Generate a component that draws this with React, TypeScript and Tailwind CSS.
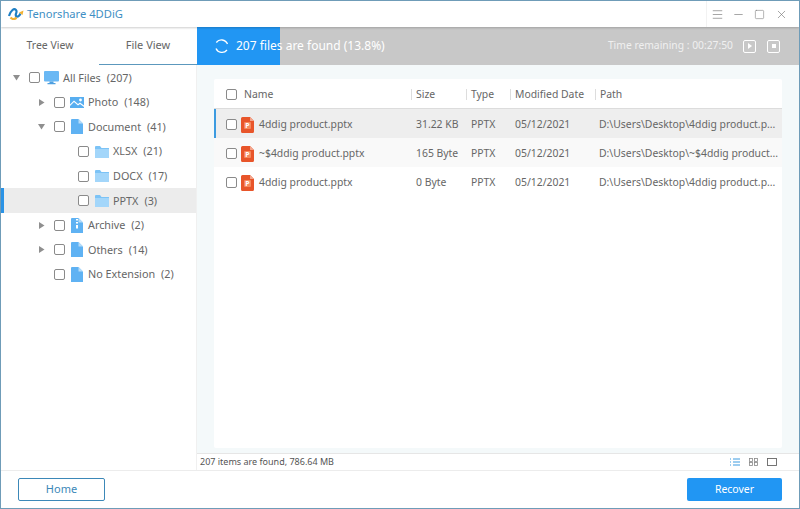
import { Menu, Minus, Square, X } from "lucide-react";

const font = "font-['Noto_Sans','Open_Sans',sans-serif]";

function Check({ className = "" }: { className?: string }) {
  return <span className={`block w-[11px] h-[11px] shrink-0 rounded-[2px] border border-[#8a8a8a] bg-white ${className}`} />;
}

function Arrow({ open }: { open?: boolean }) {
  return (
    <svg width="7" height="7" viewBox="0 0 7 7" className="shrink-0">
      {open ? <path d="M0 1h7L3.500 6.500z" fill="#8f8f8f" /> : <path d="M1 0l5.500 3.500L1 7z" fill="#8f8f8f" />}
    </svg>
  );
}

function Monitor() {
  return (
    <svg width="15" height="14" viewBox="0 0 15 14" className="shrink-0">
      <rect width="15" height="10.500" rx="1" fill="#6ab8f4" />
      <path d="M5.500 10.500h4V12h2v1.200h-8V12h2z" fill="#4d9fe0" />
    </svg>
  );
}

function Picture() {
  return (
    <svg width="14" height="11" viewBox="0 0 14 11" className="shrink-0">
      <rect width="14" height="11" fill="#58aef0" />
      <circle cx="10.500" cy="3" r="1.400" fill="#fff" />
      <path d="M0 9l4-4 4 3.500 2-1.500 4 3V8.500l-4-3-2 1.500-4-3.500-4 4z" fill="#fff" />
    </svg>
  );
}

function Doc({ zip }: { zip?: boolean }) {
  return (
    <svg width="12" height="15" viewBox="0 0 12 15" className="shrink-0">
      <path d="M1 0h6.500L12 4.500V15H0V1a1 1 0 011-1z" fill="#5fb2f3" />
      <path d="M7.500 0L12 4.500H7.500z" fill="#b5dcfa" />
      {zip && <path d="M5 1h2v1.500H5zM5 4h2v1.500H5zM5 7h2v3.500H5z" fill="#fff" />}
    </svg>
  );
}

function Folder() {
  return (
    <svg width="14" height="12" viewBox="0 0 14 12" className="shrink-0">
      <path d="M0 1a1 1 0 011-1h4l1.500 2H14v10H0z" fill="#7cc3f6" />
      <path d="M0 3h14v9H0z" fill="#a3d6fa" />
    </svg>
  );
}

function Ppt() {
  return (
    <svg width="13" height="16" viewBox="0 0 13 16" className="shrink-0">
      <path d="M1.500 0H9l4 4v10.500a1.500 1.500 0 01-1.500 1.500h-10A1.500 1.500 0 010 14.500v-13A1.500 1.500 0 011.500 0z" fill="#e8552a" />
      <path d="M9 0l4 4H9z" fill="#f4a58c" />
      <rect x="3" y="5" width="7" height="7" rx="1" fill="#f58a5f" />
      <text x="6.500" y="11" fontSize="7" fontWeight="700" textAnchor="middle" fill="#fff" fontFamily="Noto Sans">P</text>
    </svg>
  );
}

function Logo() {
  return (
    <svg width="16" height="12" viewBox="0 0 16 12" className="shrink-0">
      <path d="M1 8C3 2 6 0 8 2c2 2-2 5 .5 6.500 1.500 .5 3-1 4-3" fill="none" stroke="#1f7fc4" strokeWidth="2.200" />
      <path d="M2.500 9.500c2 2.200 4.500 2 6 0" fill="none" stroke="#f2b233" strokeWidth="2.200" />
      <path d="M11 4.500l4.500-2-1 4.500z" fill="#f2b233" />
    </svg>
  );
}

const tree = [
  { level: 0, arrow: "open", icon: <Monitor />, label: "All Files", count: "(207)" },
  { level: 1, arrow: "closed", icon: <Picture />, label: "Photo", count: "(148)" },
  { level: 1, arrow: "open", icon: <Doc />, label: "Document", count: "(41)" },
  { level: 2, icon: <Folder />, label: "XLSX", count: "(21)" },
  { level: 2, icon: <Folder />, label: "DOCX", count: "(17)" },
  { level: 2, icon: <Folder />, label: "PPTX", count: "(3)", active: true },
  { level: 1, arrow: "closed", icon: <Doc zip />, label: "Archive", count: "(2)" },
  { level: 1, arrow: "closed", icon: <Doc />, label: "Others", count: "(14)" },
  { level: 1, icon: <Doc />, label: "No Extension", count: "(2)" },
];

const files = [
  { name: "4ddig product.pptx", size: "31.22 KB", path: "D:\\Users\\Desktop\\4ddig product.p...", bg: "bg-[#eeeeee]", active: true },
  { name: "~$4ddig product.pptx", size: "165 Byte", path: "D:\\Users\\Desktop\\~$4ddig product...", bg: "bg-[#f9f9f9]" },
  { name: "4ddig product.pptx", size: "0 Byte", path: "D:\\Users\\Desktop\\4ddig product.p...", bg: "bg-white" },
];

function TreeRow({ item }: { item: (typeof tree)[number] }) {
  const pad = item.level === 0 ? "pl-[12px]" : item.level === 1 ? "pl-[37px]" : "pl-[77px]";
  return (
    <div className={`relative flex h-[24.6px] items-center pt-[1px] ${pad} ${item.active ? "bg-[#ececec]" : ""}`}>
      {item.active && <span className="absolute left-0 top-0 h-full w-[3px] bg-[#2a93e6]" />}
      {item.level < 2 && <span className="w-[16px] shrink-0">{item.arrow && <Arrow open={item.arrow === "open"} />}</span>}
      <Check className={item.level === 2 ? "mr-[5px]" : "mr-[4px]"} />
      <span className="flex w-[15px] justify-center">{item.icon}</span>
      <span className="ml-[4px] whitespace-nowrap text-[10.8px] text-[#666]">{item.label}</span>
      <span className="ml-[6px] whitespace-nowrap text-[10.8px] text-[#666]">{item.count}</span>
    </div>
  );
}

export default function App() {
  return (
    <div className={`flex h-[509px] w-[800px] flex-col overflow-hidden border border-[#6f9cb8] bg-white ${font}`}>
      {/* title bar */}
      <div className="relative z-10 flex h-[26px] shrink-0 items-center justify-between bg-white pl-[7px] pr-[11px] shadow-[0_1px_2px_rgba(0,0,0,0.2)]">
        <div className="flex items-center gap-[3px]">
          <Logo />
          <span className="text-[11.2px] text-[#3f8fc4]">Tenorshare 4DDiG</span>
        </div>
        <div className="flex h-full items-center border-l border-[#f2f2f2] pl-[4px] text-[#777]">
          <Menu size={13} strokeWidth={1.2} />
          <Minus size={13} strokeWidth={1.2} className="ml-[8px]" />
          <Square size={11} strokeWidth={1.2} className="ml-[9px]" />
          <X size={13} strokeWidth={1.2} className="ml-[10px]" />
        </div>
      </div>

      {/* tabs + progress */}
      <div className="flex h-[38px] shrink-0">
        <div className="flex w-[196px] shrink-0">
          <div className="flex flex-1 items-center justify-center pb-[1px] text-[10.5px] text-[#666]">Tree View</div>
          <div className="flex flex-1 items-center justify-center border-b-[1.5px] border-[#5c98bd] pb-[1px] text-[11px] text-[#666]">File View</div>
        </div>
        <div className="relative flex flex-1 items-center justify-between bg-[#c8c8c8] pl-[17px] pr-[19px] text-white">
          <div className="absolute inset-y-0 left-0 w-[83px] bg-[#2196f3]" />
          <div className="relative flex items-center gap-[7px]">
            <svg width="15" height="15" viewBox="0 0 15 15" fill="none" stroke="#fff" strokeWidth="1.300">
              <path d="M2.300 3.500A6.500 6.500 0 0113.500 5" />
              <path d="M13 11a6.500 6.500 0 01-11-1.500" />
            </svg>
            <span className="text-[12px]">207 files are found (13.8%)</span>
          </div>
          <div className="relative flex items-center text-[10.3px] text-[#f0f0f0]">
            <span>Time remaining : 00:27:50</span>
            <span className="ml-[10px] flex h-[13px] w-[13px] items-center justify-center rounded-[2px] border border-white">
              <span className="h-0 w-0 border-y-[3px] border-l-[4px] border-y-transparent border-l-white" />
            </span>
            <span className="ml-[11px] flex h-[13px] w-[13px] items-center justify-center rounded-[2px] border border-white">
              <span className="h-[4px] w-[4px] bg-white" />
            </span>
          </div>
        </div>
      </div>

      {/* main */}
      <div className="flex min-h-0 flex-1">
        <div className="w-[196px] shrink-0 border-r border-[#f0f0f0] bg-white">
          {tree.map((item) => (
            <TreeRow key={item.label} item={item} />
          ))}
        </div>
        <div className="flex min-w-0 flex-1 flex-col">
          <div className="min-h-0 flex-1 bg-[#f4f9fa] pb-[5px] pl-[17px] pr-[17px] pt-[14px]">
            <div className="h-full overflow-hidden rounded-[2px] bg-white">
              <div className="flex h-[30px] items-center border-b border-[#dcdcdc] pl-[12px] pt-[2px] text-[10.4px] text-[#666]">
                <Check className="mr-[7px]" />
                <span className="w-[167px] shrink-0">Name</span>
                <span className="mr-[4px] h-[11px] w-[1px] shrink-0 bg-[#ddd]" />
                <span className="w-[50px] shrink-0">Size</span>
                <span className="mr-[4px] h-[11px] w-[1px] shrink-0 bg-[#ddd]" />
                <span className="w-[39px] shrink-0">Type</span>
                <span className="mr-[4px] h-[11px] w-[1px] shrink-0 bg-[#ddd]" />
                <span className="w-[80px] shrink-0 whitespace-nowrap">Modified Date</span>
                <span className="mr-[4px] h-[11px] w-[1px] shrink-0 bg-[#ddd]" />
                <span>Path</span>
              </div>
              {files.map((f) => (
                <div key={f.name + f.size} className={`relative flex h-[29px] items-center pl-[12px] pt-[2px] text-[10.4px] text-[#666] ${f.bg}`}>
                  {f.active && <span className="absolute left-0 top-0 h-full w-[2px] bg-[#3c9be0]" />}
                  <Check className="mr-[4px]" />
                  <Ppt />
                  <span className="ml-[5px] w-[157px] shrink-0 whitespace-nowrap">{f.name}</span>
                  <span className="w-[55px] shrink-0 whitespace-nowrap">{f.size}</span>
                  <span className="w-[44px] shrink-0">PPTX</span>
                  <span className="w-[84px] shrink-0">05/12/2021</span>
                  <span className="whitespace-nowrap">{f.path}</span>
                </div>
              ))}
            </div>
          </div>
          <div className="flex h-[17px] shrink-0 items-center justify-between border-t border-[#e6e6e6] bg-white pl-[3px] pr-[22px] text-[9px] text-[#555]">
            <span>207 items are found, 786.64 MB</span>
            <div className="flex items-center gap-[9px]">
              <svg width="10" height="8" viewBox="0 0 10 8" stroke="#3c9be0" strokeWidth="1"><path d="M0 1h1M3 1h7M0 4h1M3 4h7M0 7h1M3 7h7" /></svg>
              <svg width="9" height="8" viewBox="0 0 9 8" fill="none" stroke="#888" strokeWidth="0.800"><rect x="0.500" y="0.500" width="3" height="3" /><rect x="5.500" y="0.500" width="3" height="3" /><rect x="0.500" y="4.500" width="3" height="3" /><rect x="5.500" y="4.500" width="3" height="3" /></svg>
              <svg width="10" height="8" viewBox="0 0 10 8" fill="none" stroke="#666" strokeWidth="0.900"><rect x="0.500" y="0.500" width="9" height="7" /></svg>
            </div>
          </div>
        </div>
      </div>

      {/* footer */}
      <div className="flex h-[38px] shrink-0 items-start justify-between border-t border-[#ececec] pl-[17px] pr-[17px] pt-[7px]">
        <button className="h-[23px] w-[87px] rounded-[2px] border border-[#3c88b8] text-[11px] text-[#3c88b8]">Home</button>
        <button className="h-[23px] w-[95px] rounded-[2px] bg-[#2196f3] text-[10.5px] text-white">Recover</button>
      </div>
    </div>
  );
}
